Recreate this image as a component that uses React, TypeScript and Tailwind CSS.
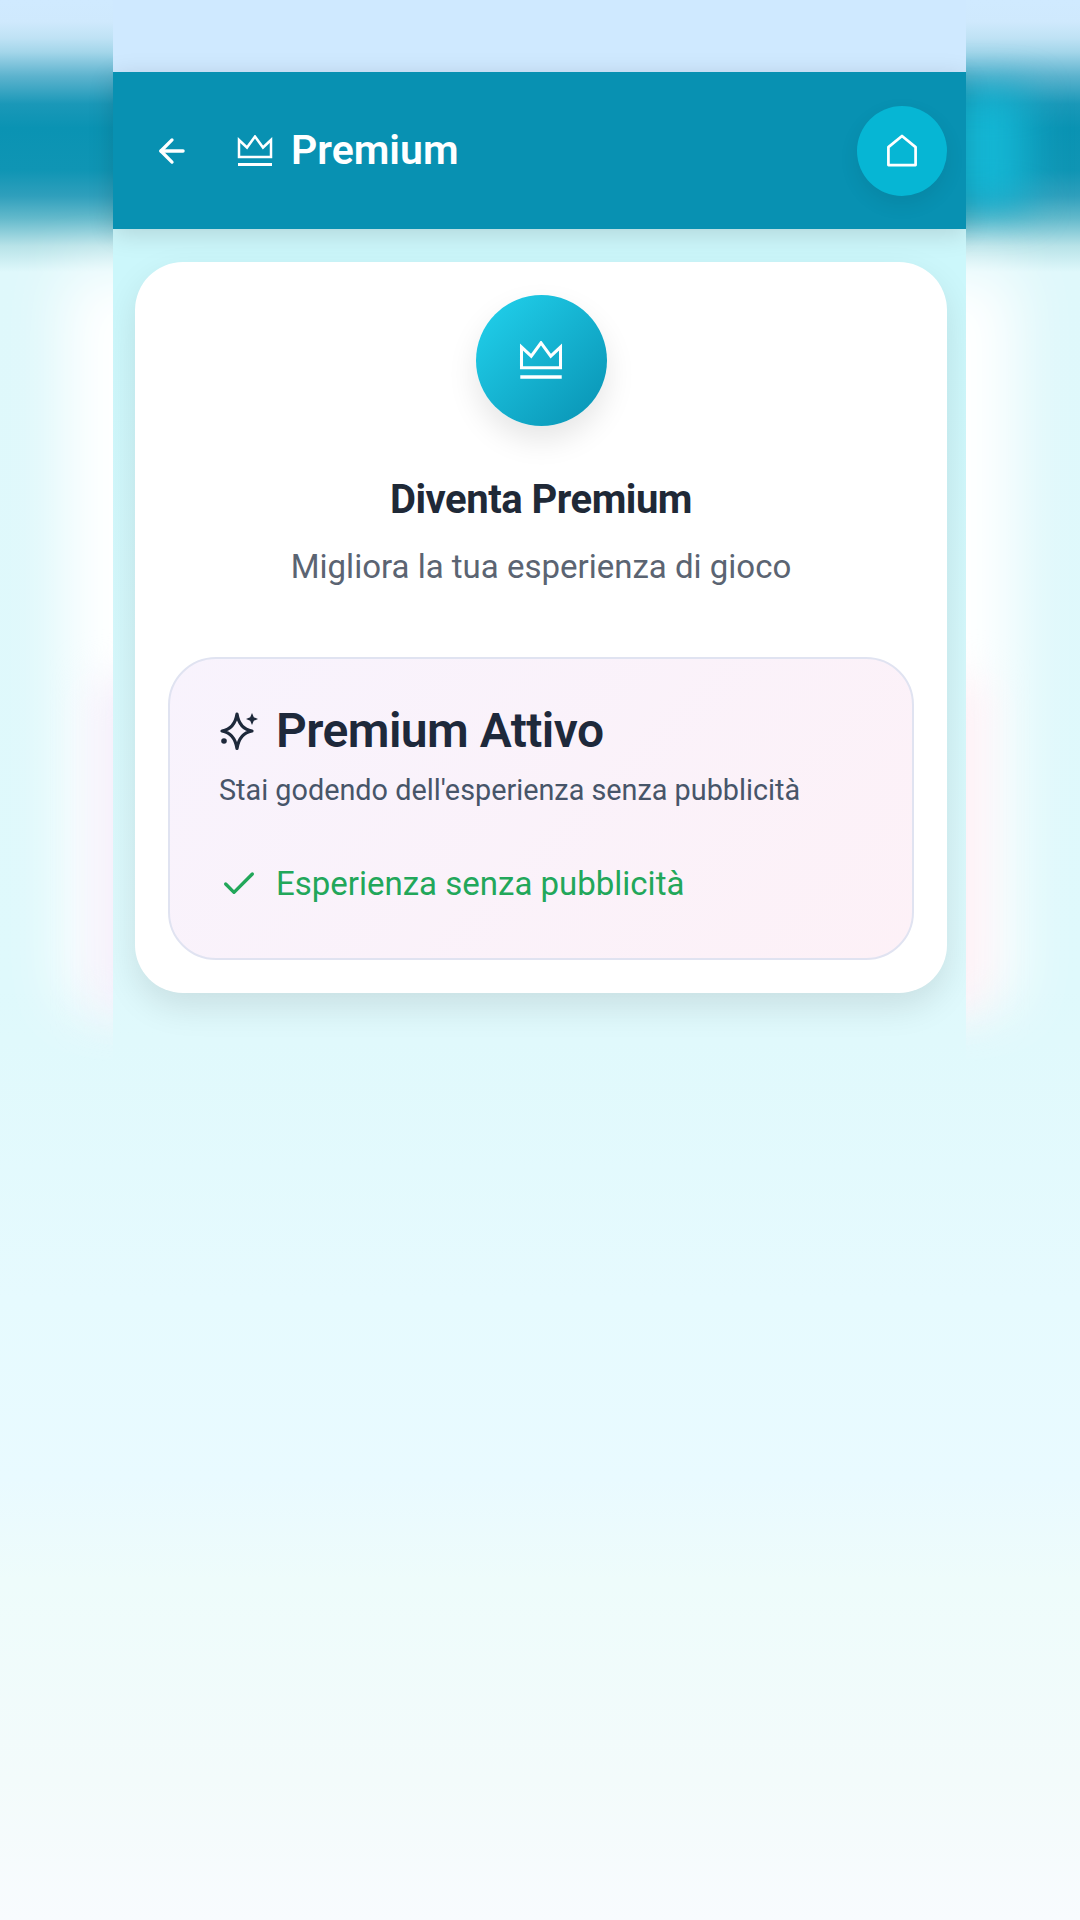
import React from "react";
import { ArrowLeft, Check } from "lucide-react";

function CrownIcon({ className }: { className?: string }) {
  return (
    <svg viewBox="0 0 36 32" fill="none" stroke="currentColor" strokeWidth="2.5" className={className}>
      <path d="M2 5V22H34V5L26 12.5L18 1.5L10 12.5Z" strokeLinejoin="miter" />
      <path d="M1 29.5H35" strokeWidth="2.8" />
    </svg>
  );
}

function HomeIcon({ className }: { className?: string }) {
  return (
    <svg viewBox="0 0 32 34" fill="none" stroke="currentColor" strokeWidth="2.8" strokeLinejoin="round" className={className}>
      <path d="M2 13.5L16 2L30 13.5V32H2Z" />
    </svg>
  );
}

function SparkleIcon({ className }: { className?: string }) {
  return (
    <svg viewBox="0 0 40 40" className={className}>
      <path
        d="M18 3C19.5 12.5 24 18.5 33 20C24 21.5 19.5 28 18 37.5C16.5 28 12 21.5 3 20C12 18.5 16.5 12.5 18 3Z"
        fill="none"
        stroke="currentColor"
        strokeWidth="3.2"
        strokeLinejoin="round"
      />
      <path d="M33 2L34.8 6.2L39 8L34.8 9.8L33 14L31.2 9.8L27 8L31.2 6.2Z" fill="currentColor" />
      <circle cx="5" cy="30" r="2.8" fill="currentColor" />
    </svg>
  );
}

function LeftPanel() {
  return (
    <div className="relative w-[113px] shrink-0 overflow-hidden bg-[linear-gradient(180deg,#d0eaff_0px,#cfe9fd_22px,#bfe2f5_38px,#a4d6ea_52px,#5db3ce_76px,#1a98b8_104px,#0a93b3_128px,#0f95b4_170px,#2f9fbc_196px,#62b9cb_218px,#b8e3e8_246px,#dff8fb_272px,#dff9fc_990px,transparent_1040px)]">
      <div className="absolute left-[64px] top-[272px] h-[735px] w-[120px] bg-white blur-[30px]" />
      <div className="absolute left-[96px] top-[680px] h-[330px] w-[80px] bg-[#f3edfa] blur-[22px]" />
    </div>
  );
}

function RightPanel() {
  return (
    <div className="relative w-[114px] shrink-0 overflow-hidden bg-[linear-gradient(180deg,#d0eaff_0px,#cfe9fd_22px,#bfe2f5_38px,#a4d6ea_52px,#5db3ce_76px,#1a98b8_104px,#0a93b3_128px,#0f95b4_170px,#2f9fbc_196px,#62b9cb_218px,#b8e3e8_246px,#dff8fb_272px,#dff9fc_990px,transparent_1040px)]">
      <div className="absolute left-[-70px] top-[92px] h-[115px] w-[130px] bg-[#14b6d4] blur-[20px]" />
      <div className="absolute left-[-70px] top-[272px] h-[735px] w-[120px] bg-white blur-[30px]" />
      <div className="absolute left-[-62px] top-[680px] h-[330px] w-[80px] bg-[#fdeff5] blur-[22px]" />
    </div>
  );
}

export default function App() {
  return (
    <div className="flex h-[1920px] w-[1080px] overflow-hidden bg-[linear-gradient(180deg,#ccf7fb_0px,#ccf7fb_300px,#e0f9fc_1040px,#e6fafe_1300px,#e9faff_1480px,#eefcfb_1580px,#f3fbfb_1780px,#f8fbfe_1920px)] font-['Roboto',sans-serif]">
      <LeftPanel />
      <main className="flex w-[853px] shrink-0 flex-col">
        <div className="h-[72px] bg-[#cfe9ff]" />
        <header className="z-10 flex h-[157px] items-center bg-[#0891b2] pl-[40px] pr-[19px] text-white shadow-[0_5px_24px_rgba(0,0,0,0.14)]">
          <ArrowLeft className="h-[38px] w-[38px]" strokeWidth={2.1} />
          <CrownIcon className="ml-[46px] h-[32px] w-[36px]" />
          <h1 className="ml-[18px] text-[41px] font-semibold leading-none">Premium</h1>
          <button className="ml-auto flex h-[90px] w-[90px] items-center justify-center rounded-full bg-[#06b6d4] shadow-[0_8px_20px_rgba(0,0,0,0.08)]">
            <HomeIcon className="h-[33px] w-[32px]" />
          </button>
        </header>
        <section className="ml-[22px] mr-[19px] mt-[33px] flex flex-col items-center rounded-[48px] bg-white px-[33px] py-[33px] shadow-[0_14px_34px_rgba(0,0,0,0.1)]">
          <div className="flex h-[131px] w-[131px] items-center justify-center rounded-full bg-[linear-gradient(135deg,#22d3ee,#0891b2)] shadow-[0_14px_30px_rgba(0,0,0,0.1)]">
            <CrownIcon className="h-[39px] w-[44px] text-white" />
          </div>
          <h2 className="mt-[50px] text-[40px] font-bold leading-[48px] tracking-[-0.5px] text-[#1f2937]">Diventa Premium</h2>
          <p className="mt-[21px] text-[33px] leading-[44px] text-[#5b6472]">Migliora la tua esperienza di gioco</p>
          <div className="mt-[68px] h-[303px] w-full rounded-[48px] border-2 border-[#e0e3f1] bg-[linear-gradient(135deg,#f8f3fd,#fdf1f7)] px-[49px] pt-[43px]">
            <div className="flex items-center gap-[17px]">
              <SparkleIcon className="h-[40px] w-[40px] text-[#1e293b]" />
              <h3 className="text-[48px] font-semibold leading-[58px] tracking-[-0.55px] text-[#1e293b]">Premium Attivo</h3>
            </div>
            <p className="mt-[10px] text-[28.8px] leading-[40px] text-[#475569]">Stai godendo dell'esperienza senza pubblicità</p>
            <div className="mt-[54px] flex items-center gap-[17px]">
              <Check className="h-[40px] w-[40px] text-[#22a75a]" strokeWidth={2} />
              <span className="text-[33px] leading-[40px] text-[#22a75a]">Esperienza senza pubblicità</span>
            </div>
          </div>
        </section>
      </main>
      <RightPanel />
    </div>
  );
}
